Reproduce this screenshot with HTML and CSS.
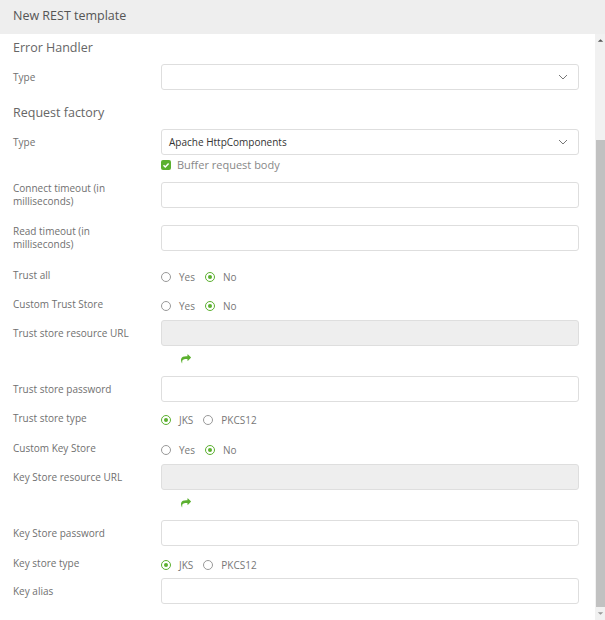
FILE: index.html
```html
<!DOCTYPE html>
<html>
<head>
<meta charset="utf-8">
<link rel="stylesheet" href="styles.css">
</head>
<body>
<div class="header">New REST template</div>
<div class="body">
  <div class="form">
    <div class="section s1">Error Handler</div>
    <div class="row r-input"><div class="label">Type</div><div class="select"><span></span><svg class="chev" viewBox="0 0 10 6"><path d="M1 1l4 4 4-4" fill="none" stroke="#777" stroke-width="1"/></svg></div></div>

    <div class="section s2">Request factory</div>
    <div class="row r-input"><div class="label">Type</div><div class="select"><span>Apache HttpComponents</span><svg class="chev" viewBox="0 0 10 6"><path d="M1 1l4 4 4-4" fill="none" stroke="#777" stroke-width="1"/></svg></div></div>
    <div class="row r-check"><div class="label"></div><div class="check"><span class="box"><svg viewBox="0 0 10 10"><path d="M2.5 5.2l1.8 1.8 3.3-3.6" fill="none" stroke="#fff" stroke-width="1.5"/></svg></span>Buffer request body</div></div>

    <div class="row r-input g1"><div class="label">Connect timeout (in milliseconds)</div><div class="input"></div></div>
    <div class="row r-input g2"><div class="label">Read timeout (in milliseconds)</div><div class="input"></div></div>

    <div class="row r-radio g3"><div class="label">Trust all</div><div class="radios"><span class="radio"></span><span class="rl">Yes</span><span class="radio on"></span><span class="rl">No</span></div></div>
    <div class="row r-radio g4"><div class="label">Custom Trust Store</div><div class="radios"><span class="radio"></span><span class="rl">Yes</span><span class="radio on"></span><span class="rl">No</span></div></div>
    <div class="row r-input g5"><div class="label">Trust store resource URL</div><div class="input disabled"></div></div>
    <div class="row r-arrow"><div class="label"></div><div class="arrow"><svg viewBox="0 0 1792 1792"><path fill="#5bb02f" d="M1792 640q0 26-19 45l-512 512q-19 19-45 19t-45-19-19-45v-256h-224q-98 0-175.5 6t-154 21.5-133 42.5-105.5 69.5-80 101-48.5 138.5-17.5 181q0 55 5 123 0 6 2.5 23.5t2.5 26.5q0 15-8.5 25t-23.5 10q-16 0-28-17-7-9-13-22t-13.5-30-10.5-24q-127-285-127-451 0-199 53-333 162-403 875-403h224v-256q0-26 19-45t45-19 45 19l512 512q19 19 19 45z"/></svg></div></div>
    <div class="row r-input g6"><div class="label">Trust store password</div><div class="input"></div></div>
    <div class="row r-radio g7"><div class="label">Trust store type</div><div class="radios"><span class="radio on"></span><span class="rl">JKS</span><span class="radio"></span><span class="rl">PKCS12</span></div></div>
    <div class="row r-radio g8"><div class="label">Custom Key Store</div><div class="radios"><span class="radio"></span><span class="rl">Yes</span><span class="radio on"></span><span class="rl">No</span></div></div>
    <div class="row r-input g9"><div class="label">Key Store resource URL</div><div class="input disabled"></div></div>
    <div class="row r-arrow"><div class="label"></div><div class="arrow"><svg viewBox="0 0 1792 1792"><path fill="#5bb02f" d="M1792 640q0 26-19 45l-512 512q-19 19-45 19t-45-19-19-45v-256h-224q-98 0-175.5 6t-154 21.5-133 42.5-105.5 69.5-80 101-48.5 138.5-17.5 181q0 55 5 123 0 6 2.5 23.5t2.5 26.5q0 15-8.5 25t-23.5 10q-16 0-28-17-7-9-13-22t-13.5-30-10.5-24q-127-285-127-451 0-199 53-333 162-403 875-403h224v-256q0-26 19-45t45-19 45 19l512 512q19 19 19 45z"/></svg></div></div>
    <div class="row r-input g10"><div class="label">Key Store password</div><div class="input"></div></div>
    <div class="row r-radio g11"><div class="label">Key store type</div><div class="radios"><span class="radio on"></span><span class="rl">JKS</span><span class="radio"></span><span class="rl">PKCS12</span></div></div>
    <div class="row r-input g12"><div class="label">Key alias</div><div class="input"></div></div>
  </div>
  <div class="scrollbar">
    <div class="sb-btn"><svg viewBox="0 0 10 10"><path d="M2 6.5L5 3.5 8 6.5z" fill="#555"/></svg></div>
    <div class="sb-space"></div>
    <div class="sb-thumb"></div>
    <div class="sb-btn"><svg viewBox="0 0 10 10"><path d="M2 3.5L5 6.5 8 3.5z" fill="#999"/></svg></div>
  </div>
</div>
</body>
</html>
```
FILE: styles.css
```css
html, body { margin: 0; padding: 0; }
body {
  width: 605px;
  height: 620px;
  overflow: hidden;
  font-family: "Open Sans", "Noto Sans", sans-serif;
  color: #555;
  background: #fff;
  display: flex;
  flex-direction: column;
}
.header {
  height: 34px;
  flex: 0 0 34px;
  background: #eeeeee;
  box-sizing: border-box;
  padding-left: 13px;
  font-size: 12.5px;
  line-height: 32px;
  color: #555;
}
.body {
  flex: 1;
  display: flex;
  min-height: 0;
}
.form {
  flex: 1;
  padding: 4px 16px 0 13px;
  display: flex;
  flex-direction: column;
}
.section {
  height: 20px;
  line-height: 20px;
  font-size: 12.5px;
  color: #666;
}
.s2 { margin-top: 13px; }
.row {
  display: grid;
  grid-template-columns: 140px 1fr;
  column-gap: 8px;
  align-items: center;
}
.label {
  font-size: 10px;
  line-height: 13px;
  color: #707070;
  padding-right: 8px;
}
.r-input { height: 26px; margin-top: 6px; }
.input, .select {
  height: 26px;
  box-sizing: border-box;
  border: 1px solid #dedede;
  border-radius: 3px;
  background: #fff;
}
.input.disabled { background: #eeeeee; }
.select {
  display: flex;
  align-items: center;
  justify-content: space-between;
  padding: 0 10px 0 7px;
  font-size: 10px;
  color: #333;
}
.chev { width: 10px; height: 6px; }
.r-check { height: 14px; margin-top: 2px; }
.check {
  display: flex;
  align-items: center;
  font-size: 11px;
  color: #888;
}
.box {
  width: 10px; height: 10px;
  border-radius: 2px;
  background: #5bb02f;
  margin-right: 6px;
  display: flex;
}
.box svg { width: 10px; height: 10px; }
.g1 { margin-top: 11px; }
.g2 { margin-top: 17px; }
.r-radio { height: 18px; align-items: start; }
.r-radio .label { padding-top: 1px; }
.radios {
  display: flex;
  align-items: center;
  padding-top: 2px;
  font-size: 10px;
  color: #777;
}
.radio {
  width: 10px; height: 10px;
  box-sizing: border-box;
  border: 1px solid #999;
  border-radius: 50%;
  margin-right: 8px;
  position: relative;
}
.radio.on { border-color: #5bb02f; }
.radio.on::after {
  content: "";
  position: absolute;
  left: 2px; top: 2px;
  width: 4px; height: 4px;
  border-radius: 50%;
  background: #5bb02f;
}
.rl { margin-right: 10px; }
.g3 { margin-top: 17px; }
.g4 { margin-top: 11px; }
.g5 { margin-top: 5px; }
.r-arrow { height: 14px; margin-top: 6px; }
.arrow { padding-left: 20px; display: flex; align-items: center; }
.arrow svg { width: 10px; height: 10px; }
.g6 { margin-top: 10px; }
.g7 { margin-top: 9px; }
.g8 { margin-top: 12px; }
.g9 { margin-top: 5px; }
.g10 { margin-top: 10px; }
.g11 { margin-top: 10px; }
.g12 { margin-top: 4px; }
.scrollbar {
  width: 10px;
  flex: 0 0 10px;
  background: #f1f1f1;
  display: flex;
  flex-direction: column;
}
.sb-btn { height: 13px; display: flex; align-items: center; justify-content: center; }
.sb-btn svg { width: 9px; height: 9px; }
.sb-space { height: 93px; }
.sb-thumb { flex: 1; background: #c1c1c1; margin-left: 1px; }
```
